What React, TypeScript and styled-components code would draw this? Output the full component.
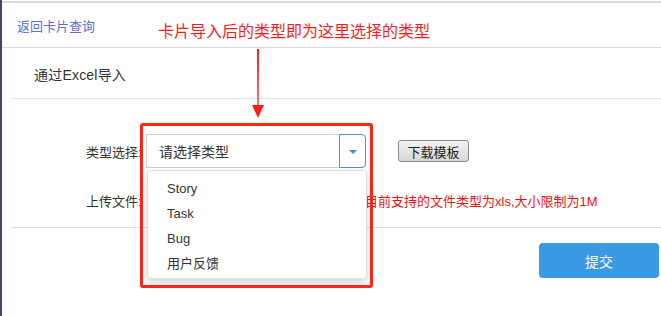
import React from "react";
import styled, { createGlobalStyle } from "styled-components";

const Global = createGlobalStyle`
  html, body { margin: 0; padding: 0; background: #fff; }
  body {
    font-family: "Liberation Sans", "Noto Sans CJK SC", sans-serif;
    color: #333;
    overflow: hidden;
  }
`;

const Frame = styled.div`
  position: relative;
  width: 661px;
  height: 316px;
  box-sizing: border-box;
  border-left: 2px solid #48436b;
  padding-top: 1px;
  overflow: hidden;
`;

const TopBar = styled.div`
  border-top: 2px solid #d8dbe1;
  border-bottom: 1px solid #d8dbe1;
  display: flex;
  align-items: center;
  padding-left: 15px;
  padding-top: 4px;
  box-sizing: border-box;
  height: 47px;
`;

const BackLink = styled.a`
  font-size: 13px;
  color: #5d6fc6;
  text-decoration: none;
  line-height: 16px;
`;

const Panel = styled.div`
  margin-left: 9px;
`;

const PanelTitle = styled.div`
  height: 51px;
  box-sizing: border-box;
  border-bottom: 1px solid #e2e2e2;
  display: flex;
  align-items: center;
  padding-left: 23px;
  font-size: 14px;
  letter-spacing: 0.2px;
  color: #333;
  padding-top: 1px;
`;

const FormBody = styled.div`
  height: 129px;
  box-sizing: border-box;
  border-bottom: 1px solid #e2e2e2;
  padding-top: 35px;
  display: flex;
  flex-direction: column;
  gap: 15px;
`;

const Row = styled.div`
  display: flex;
  align-items: center;
  height: 34px;
`;

const Label = styled.label`
  width: 60px;
  margin-left: 75px;
  font-size: 13px;
  color: #333;
  white-space: nowrap;
`;

const Select = styled.div`
  display: flex;
  width: 220px;
  height: 34px;
  box-sizing: border-box;
`;

const SelectValue = styled.div`
  flex: 1;
  border: 1px solid #cfcfcf;
  border-right: none;
  display: flex;
  align-items: center;
  padding-left: 12px;
  font-size: 14px;
  color: #333;
`;

const SelectToggle = styled.div`
  width: 25px;
  border: 1px solid #3d95e6;
  border-radius: 0 4px 4px 0;
  display: flex;
  align-items: center;
  justify-content: center;
  &::after {
    content: "";
    border-left: 4px solid transparent;
    border-right: 4px solid transparent;
    border-top: 4px solid #3a8fe0;
    margin-top: 1px;
  }
`;

const TemplateButton = styled.button`
  margin-left: 32px;
  height: 22px;
  width: 71px;
  padding: 0;
  font-family: inherit;
  font-size: 13px;
  color: #222;
  border: 1px solid #8a8a8a;
  border-radius: 3px;
  background: linear-gradient(#f4f4f4, #d6d6d6);
`;

const FileSlot = styled.div`
  width: 219px;
  height: 34px;
`;

const Hint = styled.span`
  font-size: 13px;
  color: #f01010;
  white-space: nowrap;
`;

const Footer = styled.div`
  display: flex;
  justify-content: flex-end;
  padding: 15px 2px 0 0;
`;

const SubmitButton = styled.button`
  width: 120px;
  height: 35px;
  border: none;
  border-radius: 4px;
  background: #3a99e3;
  color: #fff;
  font-family: inherit;
  font-size: 14px;
`;

const Menu = styled.ul`
  position: absolute;
  left: 145px;
  top: 170px;
  width: 220px;
  height: 109px;
  box-sizing: border-box;
  margin: 0;
  padding: 5px 0 4px;
  list-style: none;
  background: #fff;
  border: 1px solid #e0e0e0;
  border-radius: 4px;
  box-shadow: 0 4px 8px rgba(0, 0, 0, 0.16);
`;

const MenuItem = styled.li`
  height: 25px;
  line-height: 25px;
  padding-left: 19px;
  font-size: 13px;
  color: #333;
`;

const Highlight = styled.div`
  position: absolute;
  left: 138px;
  top: 123px;
  width: 233px;
  height: 165px;
  box-sizing: border-box;
  border: 3px solid #ff2418;
  border-radius: 3px;
`;

const Annotation = styled.div`
  position: absolute;
  left: 156px;
  top: 23px;
  font-size: 16px;
  line-height: 18px;
  color: #ff1a1a;
  white-space: nowrap;
`;

const Arrow = styled.svg`
  position: absolute;
  left: 248px;
  top: 49px;
`;

export default function App() {
  return (
    <>
      <Global />
      <Frame>
        <TopBar>
          <BackLink href="#">返回卡片查询</BackLink>
        </TopBar>
        <Panel>
          <PanelTitle>通过Excel导入</PanelTitle>
          <FormBody>
            <Row>
              <Label>类型选择:</Label>
              <Select>
                <SelectValue>请选择类型</SelectValue>
                <SelectToggle />
              </Select>
              <TemplateButton>下载模板</TemplateButton>
            </Row>
            <Row>
              <Label>上传文件:</Label>
              <FileSlot />
              <Hint>目前支持的文件类型为xls,大小限制为1M</Hint>
            </Row>
          </FormBody>
          <Footer>
            <SubmitButton>提交</SubmitButton>
          </Footer>
        </Panel>
        <Menu>
          <MenuItem>Story</MenuItem>
          <MenuItem>Task</MenuItem>
          <MenuItem>Bug</MenuItem>
          <MenuItem>用户反馈</MenuItem>
        </Menu>
        <Highlight />
        <Annotation>卡片导入后的类型即为这里选择的类型</Annotation>
        <Arrow width="16" height="70" viewBox="0 0 16 70">
          <path d="M7 0 L9 0 L8.6 56 L7.4 56 Z" fill="#ff1a1a" />
          <path d="M2 56 L14 56 L8 69 Z" fill="#ff1a1a" />
        </Arrow>
      </Frame>
    </>
  );
}
